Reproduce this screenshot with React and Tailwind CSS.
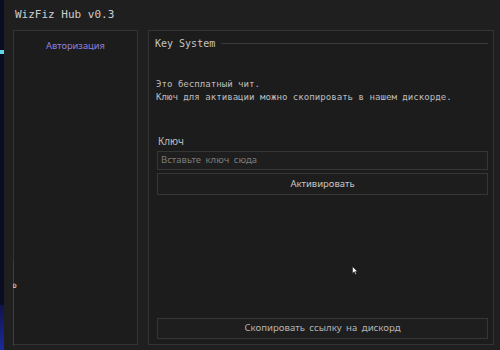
export default function App() {
  const mono = { fontFamily: '"DejaVu Sans Mono", "Liberation Mono", monospace' };
  const sans = { fontFamily: '"Noto Sans", "Open Sans", sans-serif' };

  return (
    <div className="w-[500px] h-[350px] flex overflow-hidden bg-[#1f1f1f]">
      {/* desktop strip on the left */}
      <div className="w-[4px] h-full flex flex-col bg-[#0a0d22]">
        <div className="h-[50px]" />
        <div className="h-[4px] bg-[#5fd6e6]" />
        <div className="flex-1" />
        <div className="h-[45px] bg-gradient-to-b from-[#10144a] to-[#1a2a9a]" />
      </div>

      <div className="flex-1 flex flex-col bg-[#1f1f1f]">
        <div className="h-[30px] flex items-center pl-[11px] text-[11px] text-[#cdcdcd]" style={mono}>
          WizFiz Hub v0.3
        </div>

        <div className="flex-1 flex gap-[10px] pl-[9px] pr-[6px] pb-[5px]">
          {/* sidebar */}
          <div className="relative w-[125px] border border-[#343434] bg-[#1c1c1c] flex flex-col items-center">
            <div className="mt-[8px] text-[9.3px] text-[#8f80dc]" style={sans}>Авторизация</div>
            <div className="absolute left-[-1px] top-[230px] w-[1px] h-[85px] bg-[#3e3e3e]" />
            <div className="absolute left-[-1px] top-[252px] text-[6px] leading-none text-white" style={mono}>D</div>
          </div>

          {/* key system panel */}
          <div className="relative flex-1 border border-[#343434] bg-[#1c1c1c] flex flex-col pl-[6px] pr-[5px]">
            <div className="flex items-center gap-[6px] mt-[5px]">
              <span className="text-[10px] text-[#c4c4c4] leading-[16px]" style={mono}>Key System</span>
              <div className="flex-1 h-[1px] bg-[#3a3a3a] mt-[-1px]" />
            </div>

            <div className="mt-[26px] pl-[1px] text-[9.1px] leading-[13px] text-[#bcbcbc]" style={mono}>
              <div>Это бесплатный чит.</div>
              <div>Ключ для активации можно скопировать в нашем дискорде.</div>
            </div>

            <div className="mt-[30px] pl-[3px] text-[10px] leading-[14px] text-[#bdbdbd]" style={sans}>Ключ</div>

            <div className="mt-[3px] ml-[2px] h-[19px] border border-[#363636] bg-[#1e1e1e] flex items-center pl-[3px] text-[9.5px] text-[#7c7c7c] [word-spacing:2px]" style={sans}>
              Вставьте ключ сюда
            </div>

            <div className="mt-[3px] ml-[2px] h-[22px] border border-[#363636] bg-[#1d1d1d] flex items-center justify-center text-[9.5px] text-[#c6c6c6]" style={sans}>
              Активировать
            </div>

            <div className="flex-1" />

            <div className="mb-[5px] ml-[2px] h-[21px] border border-[#363636] bg-[#1e1e1e] flex items-center justify-center text-[9.6px] text-[#b4b4b4] [word-spacing:2px]" style={sans}>
              Скопировать ссылку на дискорд
            </div>

            {/* mouse cursor */}
            <svg className="absolute left-[203px] top-[235px]" width="6" height="9" viewBox="0 0 6 9">
              <path d="M0.5 0.5 L0.5 7.5 L2.2 5.8 L3.4 8.5 L4.4 8 L3.3 5.4 L5.5 5.4 Z" fill="#ffffff" stroke="#222" strokeWidth="0.6" />
            </svg>
          </div>
        </div>
      </div>
    </div>
  );
}
